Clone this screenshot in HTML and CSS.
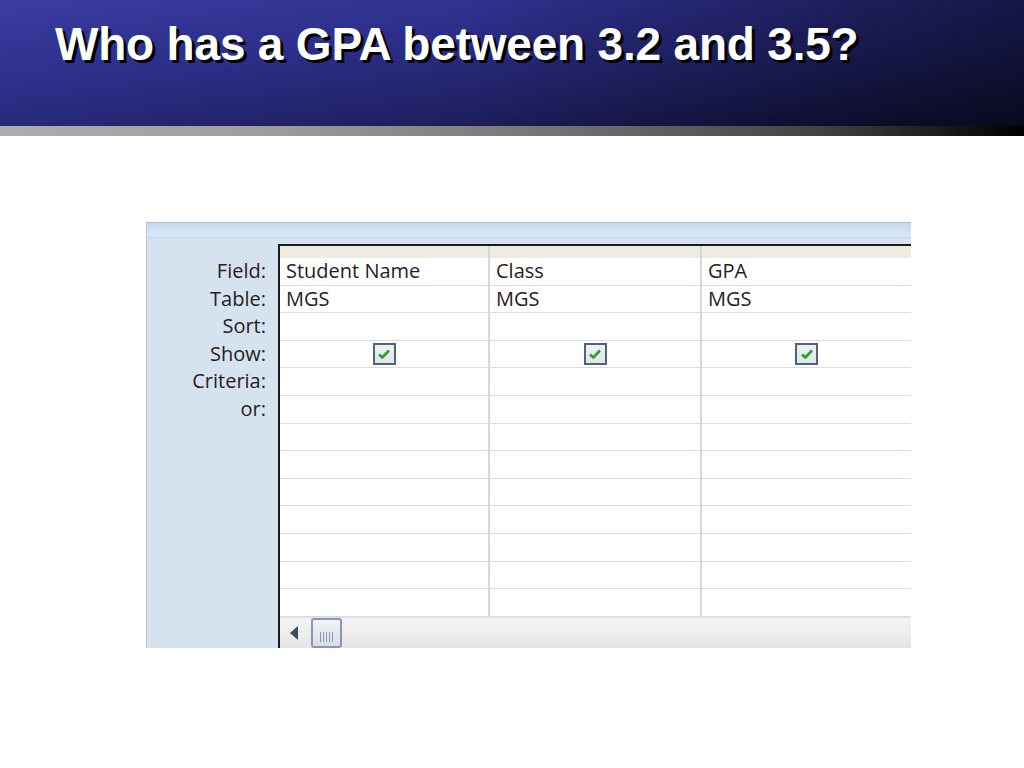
FILE: index.html
```html
<!DOCTYPE html>
<html>
<head>
<meta charset="utf-8">
<link rel="stylesheet" href="styles.css">
</head>
<body>
<header class="banner">
  <h1 class="title"><span class="title-text">Who has a GPA between 3.2 and 3.5?</span></h1>
</header>
<div class="rule"></div>
<main class="stage">
  <section class="panel">
    <div class="panel-top"></div>
    <div class="panel-body">
      <div class="labels">
        <div class="label">Field:</div>
        <div class="label">Table:</div>
        <div class="label">Sort:</div>
        <div class="label">Show:</div>
        <div class="label">Criteria:</div>
        <div class="label">or:</div>
      </div>
      <div class="grid">
        <div class="cols">
          <div class="col col1">
            <div class="head"></div>
            <div class="cell">Student Name</div>
            <div class="cell">MGS</div>
            <div class="cell"></div>
            <div class="cell center"><span class="chk"><svg viewBox="0 0 14 12" width="14" height="12"><path d="M2 6.5 L5.3 9.5 L12 2.5" fill="none" stroke="#2aa02a" stroke-width="2.6" stroke-linejoin="round"/></svg></span></div>
            <div class="cell"></div><div class="cell"></div><div class="cell"></div><div class="cell"></div>
            <div class="cell"></div><div class="cell"></div><div class="cell"></div><div class="cell"></div><div class="cell"></div>
          </div>
          <div class="col col2">
            <div class="head"></div>
            <div class="cell">Class</div>
            <div class="cell">MGS</div>
            <div class="cell"></div>
            <div class="cell center"><span class="chk"><svg viewBox="0 0 14 12" width="14" height="12"><path d="M2 6.5 L5.3 9.5 L12 2.5" fill="none" stroke="#2aa02a" stroke-width="2.6" stroke-linejoin="round"/></svg></span></div>
            <div class="cell"></div><div class="cell"></div><div class="cell"></div><div class="cell"></div>
            <div class="cell"></div><div class="cell"></div><div class="cell"></div><div class="cell"></div><div class="cell"></div>
          </div>
          <div class="col col3">
            <div class="head"></div>
            <div class="cell">GPA</div>
            <div class="cell">MGS</div>
            <div class="cell"></div>
            <div class="cell center"><span class="chk"><svg viewBox="0 0 14 12" width="14" height="12"><path d="M2 6.5 L5.3 9.5 L12 2.5" fill="none" stroke="#2aa02a" stroke-width="2.6" stroke-linejoin="round"/></svg></span></div>
            <div class="cell"></div><div class="cell"></div><div class="cell"></div><div class="cell"></div>
            <div class="cell"></div><div class="cell"></div><div class="cell"></div><div class="cell"></div><div class="cell"></div>
          </div>
        </div>
        <div class="scrollbar">
          <span class="arrow"></span>
          <span class="thumb"><span class="grip"></span><span class="grip"></span><span class="grip"></span><span class="grip"></span><span class="grip"></span></span>
        </div>
      </div>
    </div>
  </section>
</main>
</body>
</html>
```

FILE: styles.css
```css
html, body {
  margin: 0;
  padding: 0;
  background: #ffffff;
}

.banner {
  height: 126px;
  background: linear-gradient(172deg, #3a3ca2 0%, #2c2e88 35%, #1d1e5c 70%, #0c0b28 100%);
  position: relative;
  overflow: hidden;
}
.banner::after {
  content: "";
  position: absolute;
  inset: 0;
  background: linear-gradient(to right, rgba(0,0,0,0) 0%, rgba(0,0,0,0) 45%, rgba(5,5,20,0.45) 100%);
}

.title {
  margin: 0;
  padding: 18px 0 0 55px;
  position: relative;
  z-index: 1;
  font-family: "Liberation Sans", Arial, sans-serif;
  font-weight: bold;
  font-size: 46px;
  line-height: 52px;
  color: #ffffff;
  text-shadow: 3px 3px 0 #000000;
  white-space: nowrap;
}
.title-text {
  display: inline-block;
  letter-spacing: -0.2px;
}

.rule {
  height: 10px;
  background: linear-gradient(to right, #acaea9 0%, #9e9f9b 25%, #7a7b78 50%, #424241 80%, #000000 100%);
}

.stage {
  padding: 86px 0 0 146px;
}

.panel {
  width: 765px;
  height: 426px;
  background: #d5e3f0;
  border-left: 1px solid #b8c6d2;
  box-sizing: border-box;
  display: flex;
  flex-direction: column;
}

.panel-top {
  height: 14px;
  border-top: 1px solid #a9bdd3;
  background: linear-gradient(to bottom, #c5d8ef 0%, #d3e2f4 60%, #dae7f6 100%);
  border-bottom: 1px solid #c7d6e6;
  flex: none;
}

.panel-body {
  flex: 1;
  display: flex;
  padding-top: 6px;
}

.labels {
  width: 131px;
  flex: none;
  padding-top: 13px;
  font-family: "Open Sans", "Noto Sans", sans-serif;
  font-size: 20px;
  color: #2a1a22;
  box-sizing: border-box;
  padding-right: 12px;
}
.label {
  height: 27.6px;
  line-height: 27.6px;
  text-align: right;
}

.grid {
  flex: 1;
  border-top: 2px solid #1b1b1b;
  border-left: 2px solid #1b1b1b;
  border-bottom: 2px solid #1b1b1b;
  background: #ffffff;
  display: flex;
  flex-direction: column;
  overflow: hidden;
}

.cols {
  display: flex;
  flex: none;
}
.col {
  flex: none;
  box-sizing: border-box;
}
.col1 { width: 210px; border-right: 2px solid #d4d7de; }
.col2 { width: 212px; border-right: 2px solid #d4d7de; }
.col3 { flex: 1; }

.head {
  height: 12px;
  background: #eeecdf;
}

.cell {
  height: 27.6px;
  box-sizing: border-box;
  border-bottom: 1px solid #d8dce4;
  padding-left: 6px;
  font-family: "Open Sans", "Noto Sans", sans-serif;
  font-size: 20px;
  line-height: 26px;
  color: #2a1a22;
  white-space: nowrap;
}
.cell.center {
  display: flex;
  justify-content: center;
  align-items: center;
  padding-left: 0;
}

.chk {
  width: 19px;
  height: 18px;
  border: 2px solid #4f6479;
  background: linear-gradient(to bottom, #eef1f4, #dfe5ea);
  display: flex;
  align-items: center;
  justify-content: center;
}

.scrollbar {
  flex: 1;
  background: linear-gradient(to bottom, #f4f4f4 0%, #ececec 60%, #e4e4e4 100%);
  border-top: 1px solid #e2e2e2;
  display: flex;
  align-items: center;
  padding-left: 10px;
  gap: 13px;
}
.arrow {
  width: 0;
  height: 0;
  border-top: 7px solid transparent;
  border-bottom: 7px solid transparent;
  border-right: 8px solid #3b4b60;
}
.thumb {
  width: 27px;
  height: 22px;
  border: 2px solid #8a96b4;
  border-radius: 3px;
  background: linear-gradient(to bottom, #f3f4f7, #d9dde6);
  display: flex;
  justify-content: center;
  align-items: flex-end;
  gap: 2px;
  padding-bottom: 4px;
  box-sizing: content-box;
}
.grip {
  width: 1px;
  height: 10px;
  background: #8c95a8;
}
```
